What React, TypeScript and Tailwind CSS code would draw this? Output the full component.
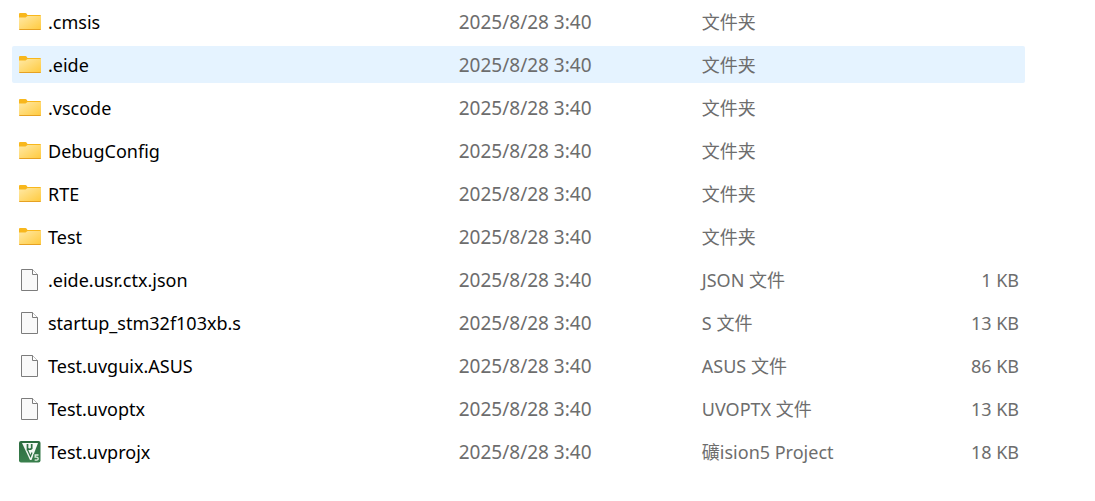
type Kind = "folder" | "file" | "keil";

interface Entry {
  name: string;
  kind: Kind;
  modified: string;
  type: string;
  size?: string;
}

const entries: Entry[] = [
  { name: ".cmsis", kind: "folder", modified: "2025/8/28 3:40", type: "文件夹" },
  { name: ".eide", kind: "folder", modified: "2025/8/28 3:40", type: "文件夹" },
  { name: ".vscode", kind: "folder", modified: "2025/8/28 3:40", type: "文件夹" },
  { name: "DebugConfig", kind: "folder", modified: "2025/8/28 3:40", type: "文件夹" },
  { name: "RTE", kind: "folder", modified: "2025/8/28 3:40", type: "文件夹" },
  { name: "Test", kind: "folder", modified: "2025/8/28 3:40", type: "文件夹" },
  { name: ".eide.usr.ctx.json", kind: "file", modified: "2025/8/28 3:40", type: "JSON 文件", size: "1 KB" },
  { name: "startup_stm32f103xb.s", kind: "file", modified: "2025/8/28 3:40", type: "S 文件", size: "13 KB" },
  { name: "Test.uvguix.ASUS", kind: "file", modified: "2025/8/28 3:40", type: "ASUS 文件", size: "86 KB" },
  { name: "Test.uvoptx", kind: "file", modified: "2025/8/28 3:40", type: "UVOPTX 文件", size: "13 KB" },
  { name: "Test.uvprojx", kind: "keil", modified: "2025/8/28 3:40", type: "礦ision5 Project", size: "18 KB" },
];

function FolderIcon() {
  return (
    <svg className="shrink-0" width="24" height="23" viewBox="0 0 24 23" aria-hidden="true">
      <defs>
        <linearGradient id="folder-front" x1="0" y1="0" x2="1" y2="1">
          <stop offset="0" stopColor="#ffe9a6" />
          <stop offset="1" stopColor="#ffca3e" />
        </linearGradient>
      </defs>
      <path d="M1 4q0-1 1-1h5.5q.6 0 1 .5L9.500 5H22q1 0 1 1v4H1z" fill="#f8b71c" />
      <path d="M1 7.500h6.500L9.500 6H23v13.500H1z" fill="url(#folder-front)" />
      <path d="M1 19h22q0 1-1 1H2q-1 0-1-1z" fill="#e6a122" />
    </svg>
  );
}

function FileIcon() {
  return (
    <svg className="shrink-0" width="24" height="23" viewBox="0 0 24 23" aria-hidden="true">
      <path d="M3.500 1.500h11l5 5v16h-16z" fill="#f9f9f9" stroke="#7c7c7c" />
      <path d="M14.500 1.500v5h5" fill="#fff" stroke="#7c7c7c" />
    </svg>
  );
}

function KeilIcon() {
  return (
    <svg className="shrink-0" width="24" height="23" viewBox="0 0 24 23" aria-hidden="true">
      <defs>
        <linearGradient id="keil-bg" x1="0" y1="0" x2="0" y2="1">
          <stop offset="0" stopColor="#2c6b3f" />
          <stop offset="1" stopColor="#3a804d" />
        </linearGradient>
      </defs>
      <rect x="1" y="1" width="21.500" height="21.500" rx="2" fill="url(#keil-bg)" />
      <path d="M4 3h16l-6.500 17h-1.500z" fill="#f4f8f4" />
      <path d="M9.500 4v6.500M9.500 8.500q2 1.500 4.200 0M13.700 4v5" fill="none" stroke="#2f7043" strokeWidth="1.700" />
      <path d="M9.600 10l2.900 6.500 1.500-4" fill="none" stroke="#2f7043" strokeWidth="1.200" />
      <path d="M15.500 14h6v7.500h-6z" fill="#377c4a" />
      <path d="M20.500 15h-3.300v2.200q3-.4 3 1.500t-3.500 1.300" fill="none" stroke="#dcebdd" strokeWidth="1.300" />
    </svg>
  );
}

function EntryIcon({ kind }: { kind: Kind }) {
  if (kind === "folder") return <FolderIcon />;
  if (kind === "keil") return <KeilIcon />;
  return <FileIcon />;
}

export default function App() {
  const highlighted = ".eide";

  return (
    <main className="min-h-screen bg-white pl-3 pr-[70px] font-['Noto_Sans','Noto_Sans_CJK_SC',sans-serif] text-[18px] leading-6 text-[#6d6d6d]">
      <table className="w-full table-fixed border-collapse text-left whitespace-nowrap" aria-label="Files">
        <colgroup>
          <col className="w-[44%]" />
          <col className="w-[24%]" />
          <col className="w-[20%]" />
          <col />
        </colgroup>
        <tbody>
          {entries.map((entry) => {
            const bg = entry.name === highlighted ? "bg-[#e5f3ff]" : "hover:bg-[#e5f3ff]";
            return (
              <tr key={entry.name}>
                <td className="p-0 py-[3px]">
                  <div className={`flex h-[37px] items-center gap-1.5 rounded-l-xs pl-1.5 text-black ${bg}`}>
                    <EntryIcon kind={entry.kind} />
                    <span>{entry.name}</span>
                  </div>
                </td>
                <td className="p-0 py-[3px]">
                  <div className={`flex h-[37px] items-center pl-px text-[19px] ${bg}`}>{entry.modified}</div>
                </td>
                <td className="p-0 py-[3px]">
                  <div className={`flex h-[37px] items-center pl-px ${bg}`}>{entry.type}</div>
                </td>
                <td className="p-0 py-[3px]">
                  <div className={`flex h-[37px] items-center justify-end rounded-r-xs pr-1.5 ${bg}`}>{entry.size}</div>
                </td>
              </tr>
            );
          })}
        </tbody>
      </table>
    </main>
  );
}
